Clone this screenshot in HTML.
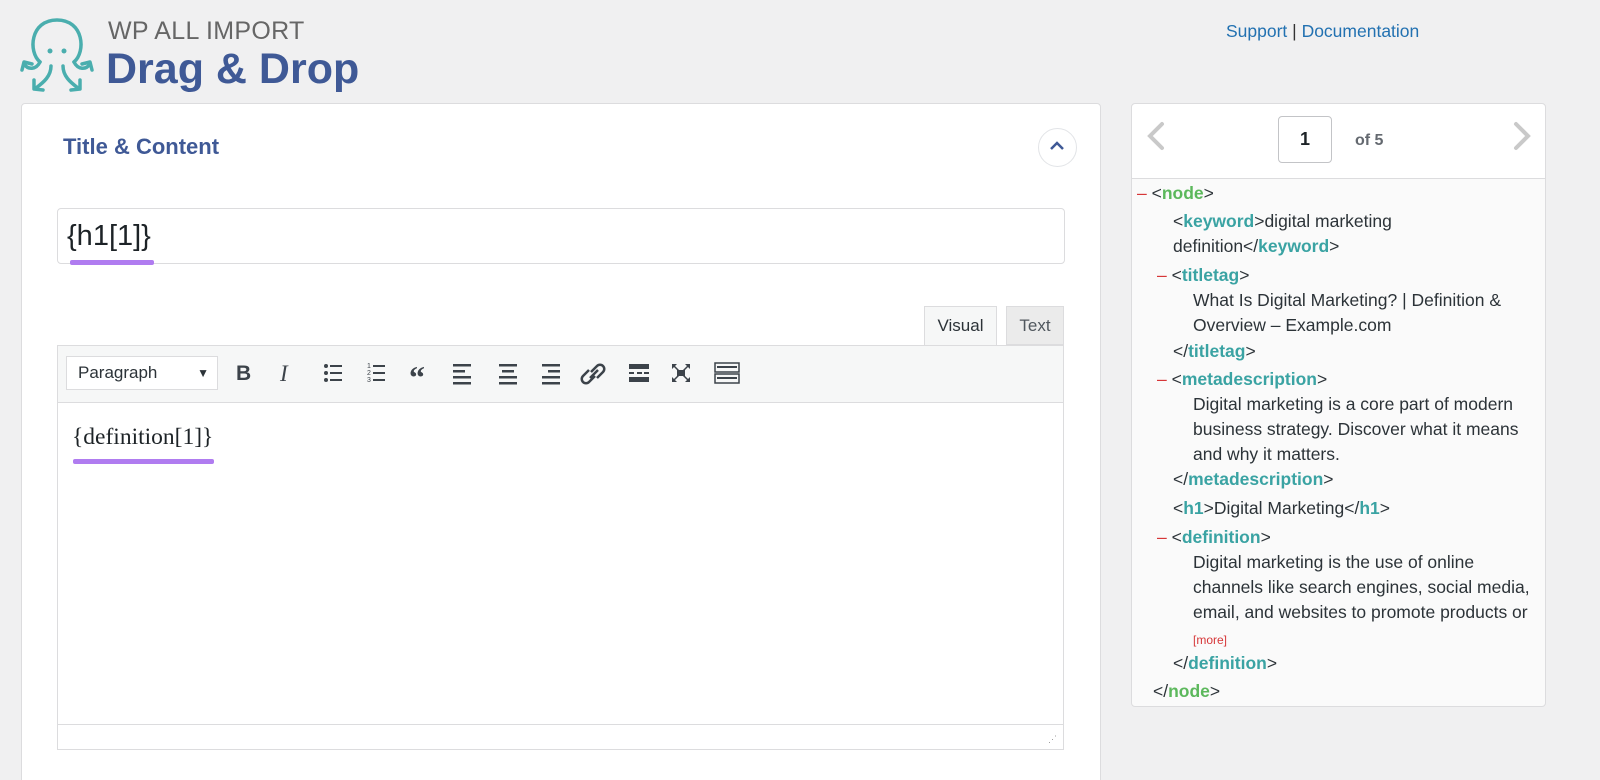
<!DOCTYPE html>
<html><head><meta charset="utf-8"><style>
html,body{margin:0;width:1600px;height:780px;overflow:hidden}
body{background:#f0f0f1;font-family:"Liberation Sans",sans-serif;position:relative;color:#2c3338}
.a{position:absolute}
.x{position:absolute;left:0;white-space:nowrap;font-size:17.5px;color:#2c3338;line-height:20px}
.t{color:#3aa3a3;font-weight:bold}
.n{color:#5cb85c;font-weight:bold}
.m{color:#d63638}
</style></head><body>
<svg class="a" style="left:18px;top:14px" width="78" height="82" viewBox="0 0 78 82" fill="none" stroke="#4aaeae" stroke-width="3.5" stroke-linecap="round" stroke-linejoin="round">
<path d="M22 48 C10 38 12 6 39 6 C66 6 68 38 56 48"/>
<circle cx="32" cy="37" r="2.5" fill="#4aaeae" stroke="none"/><circle cx="46" cy="37" r="2.5" fill="#4aaeae" stroke="none"/>
<path d="M22 48 C18 56 10 56 6 50 M4 56 L6 48 L14 50"/>
<path d="M56 48 C60 56 68 56 72 50 M74 56 L72 48 L64 50"/>
<path d="M33 52 C33 62 26 68 18 74 M16 66 L16 75 L25 76"/>
<path d="M45 52 C45 62 52 68 60 74 M62 66 L62 75 L53 76"/>
</svg>
<div class="a" style="left:108px;top:17px;font-size:25px;color:#666;letter-spacing:0.3px">WP ALL IMPORT</div>
<div class="a" style="left:106px;top:45px;font-size:43px;font-weight:bold;color:#3f5996">Drag &amp; Drop</div>
<div class="a" style="left:1226px;top:21px;font-size:17.5px;color:#2271b1">Support <span style="color:#333">|</span> Documentation</div>

<div class="a" style="left:21px;top:103px;width:1078px;height:690px;background:#fff;border:1px solid #dcdcde;border-radius:4px"></div>
<div class="a" style="left:63px;top:134px;font-size:22px;font-weight:bold;color:#3f5996">Title &amp; Content</div>
<div class="a" style="left:1038px;top:128px;width:37px;height:37px;border:1px solid #e2e4e7;border-radius:50%"></div>
<svg class="a" style="left:1048px;top:139px" width="18" height="14"><path d="M3 10 L9 4 L15 10" stroke="#3f5996" stroke-width="2.5" fill="none"/></svg>
<div class="a" style="left:57px;top:208px;width:1006px;height:54px;border:1px solid #dcdcde;border-radius:4px"></div>
<div class="a" style="left:67px;top:220px;font-size:29px;color:#1d2327">{h1[1]}</div>
<div class="a" style="left:70px;top:260px;width:84px;height:5px;background:#b07cf0;border-radius:2px"></div>

<div class="a" style="left:924px;top:306px;width:73px;height:40px;background:#f6f7f7;border:1px solid #dcdcde;border-bottom:none;box-sizing:border-box;font-size:17px;text-align:center;line-height:38px">Visual</div>
<div class="a" style="left:1006px;top:306px;width:58px;height:39px;background:#ebebeb;border:1px solid #dcdcde;box-sizing:border-box;font-size:17px;text-align:center;line-height:38px;color:#50575e">Text</div>
<div class="a" style="left:57px;top:345px;width:1007px;height:405px;border:1px solid #dcdcde;box-sizing:border-box"></div>
<div class="a" style="left:58px;top:346px;width:1005px;height:56px;background:#f6f7f7;border-bottom:1px solid #dcdcde"></div>
<div class="a" style="left:66px;top:356px;width:152px;height:34px;background:#fff;border:1px solid #dcdcde;box-sizing:border-box;font-size:17px;line-height:32px;padding-left:11px;color:#2c3338">Paragraph<span style="position:absolute;right:8px;font-size:12px">▼</span></div>
<div class="a" style="left:236px;top:362px;font-size:21px;font-weight:bold;color:#3c434a">B</div>
<div class="a" style="left:280px;top:361px;font-size:23px;font-style:italic;font-family:'Liberation Serif',serif;color:#3c434a">I</div>
<svg class="a" style="left:320px;top:360px" width="440" height="28" fill="#3c434a">
<g><circle cx="6" cy="6" r="2"/><circle cx="6" cy="13" r="2"/><circle cx="6" cy="20" r="2"/><rect x="10" y="5" width="12" height="2"/><rect x="10" y="12" width="12" height="2"/><rect x="10" y="19" width="12" height="2"/></g>
<g font-size="7" font-family="Liberation Sans"><text x="47" y="8">1</text><text x="47" y="15">2</text><text x="47" y="22">3</text><rect x="53" y="5" width="12" height="2"/><rect x="53" y="12" width="12" height="2"/><rect x="53" y="19" width="12" height="2"/></g>
<text x="89" y="28" font-size="32" font-weight="bold" font-family="Liberation Serif">“</text>
<g><rect x="133" y="4" width="18" height="2.5"/><rect x="133" y="10" width="12" height="2.5"/><rect x="133" y="16" width="18" height="2.5"/><rect x="133" y="22" width="18" height="2.5"/></g>
<g><rect x="179" y="4" width="18" height="2.5"/><rect x="182" y="10" width="12" height="2.5"/><rect x="179" y="16" width="18" height="2.5"/><rect x="179" y="22" width="18" height="2.5"/></g>
<g><rect x="222" y="4" width="18" height="2.5"/><rect x="228" y="10" width="12" height="2.5"/><rect x="222" y="16" width="18" height="2.5"/><rect x="222" y="22" width="18" height="2.5"/></g>
<g fill="none" stroke="#3c434a" stroke-width="2.5"><path d="M271 12 l6-6 a4 4 0 0 1 6 6 l-6 6"/><path d="M275 16 l-6 6 a4 4 0 0 1 -6 -6 l6-6"/><path d="M270 18 l8-8"/></g>
<g><rect x="309" y="4" width="20" height="5"/><rect x="309" y="12" width="5" height="2"/><rect x="317" y="12" width="5" height="2"/><rect x="324" y="12" width="5" height="2"/><rect x="309" y="17" width="20" height="5"/></g>
<g><rect x="357" y="10" width="8" height="6"/><path d="M352 4 l5 0 l-5 5z M370 4 l-5 0 l5 5z M352 22 l5 0 l-5 -5z M370 22 l-5 0 l5 -5z"/><path d="M354 6 l5 5 M368 6 l-5 5 M354 20 l5 -5 M368 20 l-5 -5" stroke="#3c434a" stroke-width="1.5"/></g>
<g fill="none" stroke="#3c434a" stroke-width="1.5"><rect x="395" y="3" width="24" height="9"/><rect x="395" y="14" width="24" height="9"/></g>
<g><rect x="397" y="6" width="20" height="2" /><rect x="397" y="17" width="20" height="2"/></g>
</svg>
<div class="a" style="left:72px;top:424px;font-size:23.5px;font-family:'Liberation Serif',serif;color:#1d2327">{definition[1]}</div>
<div class="a" style="left:73px;top:459px;width:141px;height:5px;background:#b07cf0;border-radius:2px"></div>
<div class="a" style="left:58px;top:724px;width:1005px;height:1px;background:#dcdcde"></div>
<div class="a" style="left:1048px;top:734px;font-size:9px;color:#999">⋰</div>

<div class="a" style="left:1131px;top:103px;width:413px;height:602px;background:#fafafa;border:1px solid #dcdcde;border-radius:4px"></div>
<div class="a" style="left:1132px;top:104px;width:413px;height:74px;background:#fff;border-bottom:1px solid #dcdcde;border-radius:4px 4px 0 0"></div>
<svg class="a" style="left:1142px;top:120px" width="400" height="32" fill="none" stroke="#c9c9c9" stroke-width="4" stroke-linecap="round"><path d="M20 4 L8 16 L20 28"/><path d="M374 4 L386 16 L374 28"/></svg>
<div class="a" style="left:1278px;top:116px;width:54px;height:47px;border:1px solid #c3c4c7;border-radius:4px;background:#fff;box-sizing:border-box;text-align:center;line-height:45px;font-size:18px;font-weight:bold;color:#1d2327">1</div>
<div class="a" style="left:1355px;top:132px;font-size:16px;font-weight:bold;color:#646970">of 5</div>

<div class="a" style="left:1137px;top:0;width:410px;height:780px">
<div class="x" style="top:183px"><span class="m">–</span> &lt;<span class="n">node</span>&gt;</div>
<div class="x" style="top:211px;left:36px">&lt;<span class="t">keyword</span>&gt;digital marketing</div>
<div class="x" style="top:236px;left:36px">definition&lt;/<span class="t">keyword</span>&gt;</div>
<div class="x" style="top:265px;left:20px"><span class="m">–</span> &lt;<span class="t">titletag</span>&gt;</div>
<div class="x" style="top:290px;left:56px">What Is Digital Marketing? | Definition &amp;</div>
<div class="x" style="top:315px;left:56px">Overview – Example.com</div>
<div class="x" style="top:341px;left:36px">&lt;/<span class="t">titletag</span>&gt;</div>
<div class="x" style="top:369px;left:20px"><span class="m">–</span> &lt;<span class="t">metadescription</span>&gt;</div>
<div class="x" style="top:394px;left:56px">Digital marketing is a core part of modern</div>
<div class="x" style="top:419px;left:56px">business strategy. Discover what it means</div>
<div class="x" style="top:444px;left:56px">and why it matters.</div>
<div class="x" style="top:469px;left:36px">&lt;/<span class="t">metadescription</span>&gt;</div>
<div class="x" style="top:498px;left:36px">&lt;<span class="t">h1</span>&gt;Digital Marketing&lt;/<span class="t">h1</span>&gt;</div>
<div class="x" style="top:527px;left:20px"><span class="m">–</span> &lt;<span class="t">definition</span>&gt;</div>
<div class="x" style="top:552px;left:56px">Digital marketing is the use of online</div>
<div class="x" style="top:577px;left:56px">channels like search engines, social media,</div>
<div class="x" style="top:602px;left:56px">email, and websites to promote products or</div>
<div class="x" style="top:630px;left:56px;font-size:12px;color:#d63638">[more]</div>
<div class="x" style="top:653px;left:36px">&lt;/<span class="t">definition</span>&gt;</div>
<div class="x" style="top:681px;left:16px">&lt;/<span class="n">node</span>&gt;</div>
</div>
</body></html>
